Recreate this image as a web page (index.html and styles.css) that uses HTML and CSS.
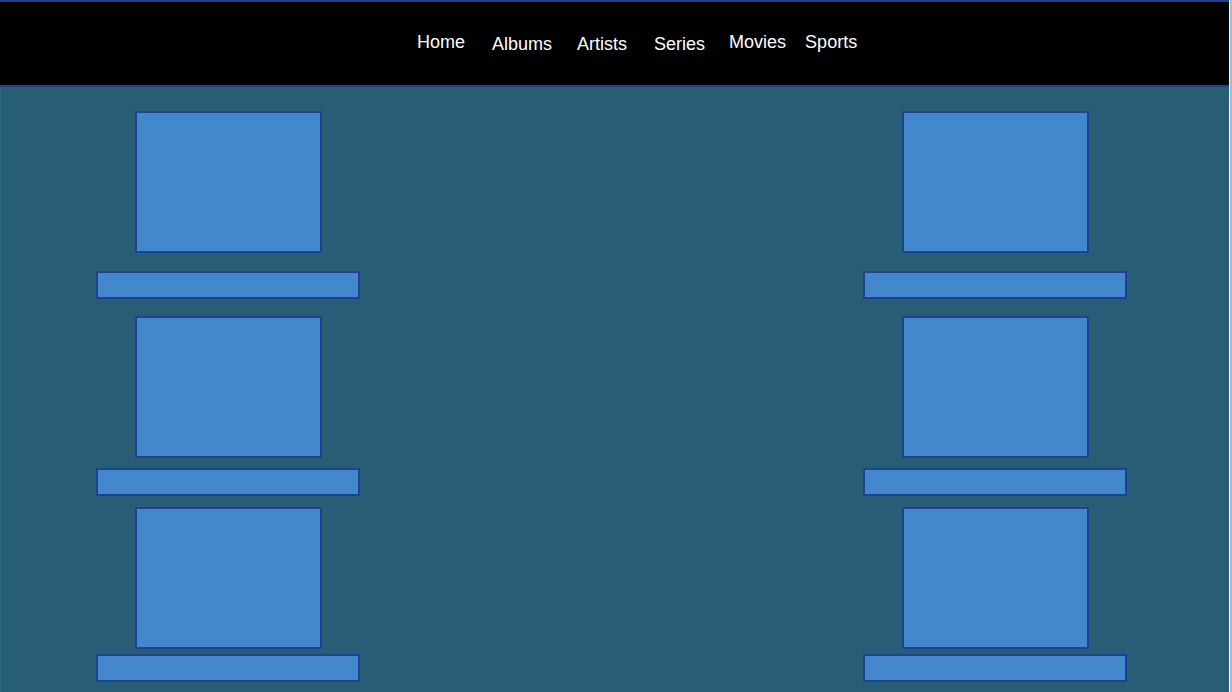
FILE: index.html
```html
<!DOCTYPE html>
<html lang="en">
<head>
  <meta charset="UTF-8">
  <meta name="viewport" content="width=device-width, initial-scale=1.0">
  <title>Media</title>
  <link rel="stylesheet" href="styles.css">
</head>
<body>
  <div class="page">
    <header class="topbar">
      <nav class="nav">
        <a href="#" class="nav-link">Home</a>
        <a href="#" class="nav-link low">Albums</a>
        <a href="#" class="nav-link low">Artists</a>
        <a href="#" class="nav-link low wide">Series</a>
        <a href="#" class="nav-link">Movies</a>
        <a href="#" class="nav-link tight">Sports</a>
      </nav>
    </header>

    <main class="content">
      <div class="column">
        <div class="thumb first"></div>
        <div class="caption after-first"></div>
        <div class="thumb after-first"></div>
        <div class="caption after-second"></div>
        <div class="thumb after-second-bar"></div>
        <div class="caption last"></div>
      </div>

      <div class="column">
        <div class="thumb first"></div>
        <div class="caption after-first"></div>
        <div class="thumb after-first"></div>
        <div class="caption after-second"></div>
        <div class="thumb after-second-bar"></div>
        <div class="caption last"></div>
      </div>
    </main>
  </div>
</body>
</html>
```

FILE: styles.css
```css
:root {
  --dark-blue: #20418f;
  --box-blue: #4387cc;
  --teal: #275d75;
}

body {
  margin: 0;
  padding: 0;
  background-color: #9fbddb;
  font-family: 'Liberation Sans', Arial, sans-serif;
  overflow: hidden;
}

.page {
  width: 1229px;
  height: 692px;
  background-color: var(--teal);
  border-right: 1px solid #ffffff;
}

.topbar {
  height: 83px;
  background-color: #000;
  border-top: 2px solid var(--dark-blue);
  border-bottom: 2px solid var(--dark-blue);
}

.nav {
  display: flex;
  align-items: flex-start;
  padding-top: 30px;
  padding-left: 417px;
}

.nav-link {
  color: #fff;
  text-decoration: none;
  font-size: 18px;
  margin-right: 26px;
}

.nav-link:first-child {
  margin-right: 27px;
}

.nav-link:nth-child(2) {
  margin-right: 25px;
}

.nav-link:nth-child(3) {
  margin-right: 27px;
}

.nav-link.low {
  padding-top: 2px;
}

.nav-link.wide {
  margin-right: 24px;
}

.nav-link.tight {
  margin-left: -7px;
}

.content {
  display: flex;
  justify-content: space-between;
  padding: 0 102px 0 95px;
  border-left: 1px solid #2e6784;
  height: 605px;
}

.column {
  width: 264px;
  display: flex;
  flex-direction: column;
  align-items: center;
}

.thumb {
  width: 183px;
  height: 138px;
  background-color: var(--box-blue);
  border: 2px solid var(--dark-blue);
}

.caption {
  width: 260px;
  height: 24px;
  background-color: var(--box-blue);
  border: 2px solid var(--dark-blue);
}

.thumb.first {
  margin-top: 24px;
}

.caption.after-first {
  margin-top: 18px;
}

.thumb.after-first {
  margin-top: 17px;
}

.caption.after-second {
  margin-top: 10px;
}

.thumb.after-second-bar {
  margin-top: 11px;
}

.caption.last {
  margin-top: 5px;
}
```
